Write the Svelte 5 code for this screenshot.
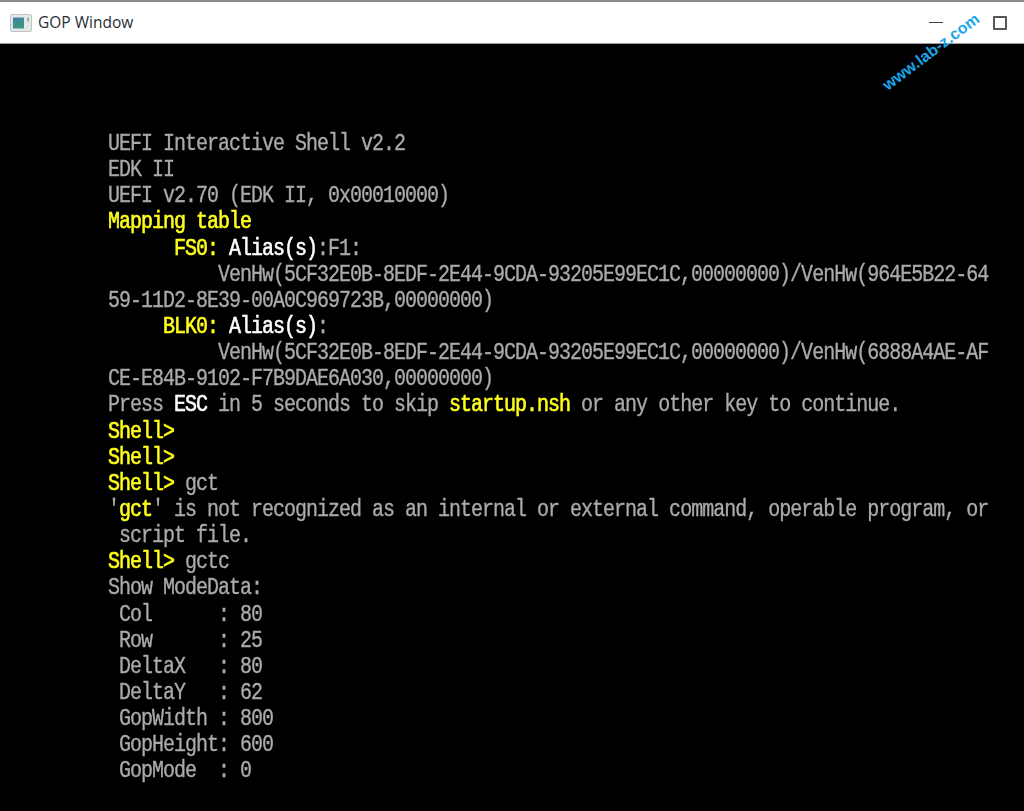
<script>
  const g = 'g', y = 'y', w = 'w';
  // each line is a list of [colour, text] runs
  const lines = [
    [[g, 'UEFI Interactive Shell v2.2']],
    [[g, 'EDK II']],
    [[g, 'UEFI v2.70 (EDK II, 0x00010000)']],
    [[y, 'Mapping table']],
    [[y, '      FS0: '], [w, 'Alias(s)'], [g, ':F1:']],
    [[g, '          VenHw(5CF32E0B-8EDF-2E44-9CDA-93205E99EC1C,00000000)/VenHw(964E5B22-64']],
    [[g, '59-11D2-8E39-00A0C969723B,00000000)']],
    [[y, '     BLK0: '], [w, 'Alias(s)'], [g, ':']],
    [[g, '          VenHw(5CF32E0B-8EDF-2E44-9CDA-93205E99EC1C,00000000)/VenHw(6888A4AE-AF']],
    [[g, 'CE-E84B-9102-F7B9DAE6A030,00000000)']],
    [[g, 'Press '], [w, 'ESC'], [g, ' in 5 seconds to skip '], [y, 'startup.nsh'], [g, ' or any other key to continue.']],
    [[y, 'Shell> ']],
    [[y, 'Shell> ']],
    [[y, 'Shell> '], [g, 'gct']],
    [[g, "'"], [y, 'gct'], [g, "' is not recognized as an internal or external command, operable program, or"]],
    [[g, ' script file.']],
    [[y, 'Shell> '], [g, 'gctc']],
    [[g, 'Show ModeData:']],
    [[g, ' Col      : 80']],
    [[g, ' Row      : 25']],
    [[g, ' DeltaX   : 80']],
    [[g, ' DeltaY   : 62']],
    [[g, ' GopWidth : 800']],
    [[g, ' GopHeight: 600']],
    [[g, ' GopMode  : 0']],
  ];
</script>

<div class="window">
  <header class="titlebar">
    <svg class="app-icon" width="22" height="18" viewBox="0 0 22 18">
      <defs>
        <linearGradient id="pane" x1="0" y1="0" x2="0.6" y2="1">
          <stop offset="0" stop-color="#3d7fa6" />
          <stop offset="1" stop-color="#3f9a7c" />
        </linearGradient>
      </defs>
      <rect x="0.5" y="0.5" width="21" height="17" rx="1.5" fill="#e6e8e8" stroke="#c2c5c5" />
      <rect x="3" y="3.5" width="11" height="11" fill="url(#pane)" />
      <rect x="17" y="3.5" width="2" height="4" fill="#8fbf9c" />
    </svg>
    <span class="title">GOP Window</span>
    <div class="controls">
      <span class="minimize"></span>
      <span class="maximize"></span>
    </div>
  </header>

  <main class="console">
    {#each lines as line}
      <div class="line">{#each line as [color, text]}<span class={color}>{text}</span>{/each}</div>
    {/each}
  </main>

  <div class="watermark">www.lab-z.com</div>
</div>

<style>
  :global(body) {
    background: #000;
  }

  .window {
    position: relative;
    width: 1024px;
    height: 811px;
    display: flex;
    flex-direction: column;
    overflow: hidden;
    background: #000;
  }

  .titlebar {
    flex: none;
    box-sizing: border-box;
    height: 44px;
    display: flex;
    align-items: center;
    gap: 6px;
    padding: 0 0 0 10px;
    background: #fff;
    border-top: 2px solid #8a8a8e;
    border-bottom: 1px solid #9a9a9a;
  }

  .app-icon {
    flex: none;
  }

  .title {
    margin-bottom: 2px;
    font-family: "Open Sans", "Noto Sans", sans-serif;
    font-size: 15.5px;
    color: #2a2f36;
  }

  .controls {
    margin-left: auto;
    display: flex;
    align-items: center;
    gap: 50px;
    padding-right: 17px;
  }

  .minimize {
    width: 14px;
    height: 1px;
    background: #444;
  }

  .maximize {
    box-sizing: border-box;
    width: 14px;
    height: 14px;
    border: 2px solid #555;
    border-radius: 1px;
  }

  .console {
    flex: 1;
    padding: 87px 0 0 108px;
    font-family: "Liberation Mono", "DejaVu Sans Mono", monospace;
    font-size: 20px;
    letter-spacing: -1px;
    line-height: 26.15px;
    filter: blur(0.4px);
  }

  .line {
    height: 26.15px;
    white-space: pre;
    transform: scaleY(1.15);
  }

  .g {
    color: #aaaaaa;
    -webkit-text-stroke: 0.3px #aaaaaa;
  }

  .y {
    color: #ffff1a;
    -webkit-text-stroke: 0.5px #ffff1a;
  }

  .w {
    color: #ffffff;
    -webkit-text-stroke: 0.5px #ffffff;
  }

  .watermark {
    position: absolute;
    left: 873px;
    top: 43px;
    font-family: "Liberation Sans", sans-serif;
    font-size: 16px;
    font-weight: bold;
    letter-spacing: 0.1px;
    color: #1aa6e8;
    transform: rotate(-37deg);
    white-space: nowrap;
  }
</style>
